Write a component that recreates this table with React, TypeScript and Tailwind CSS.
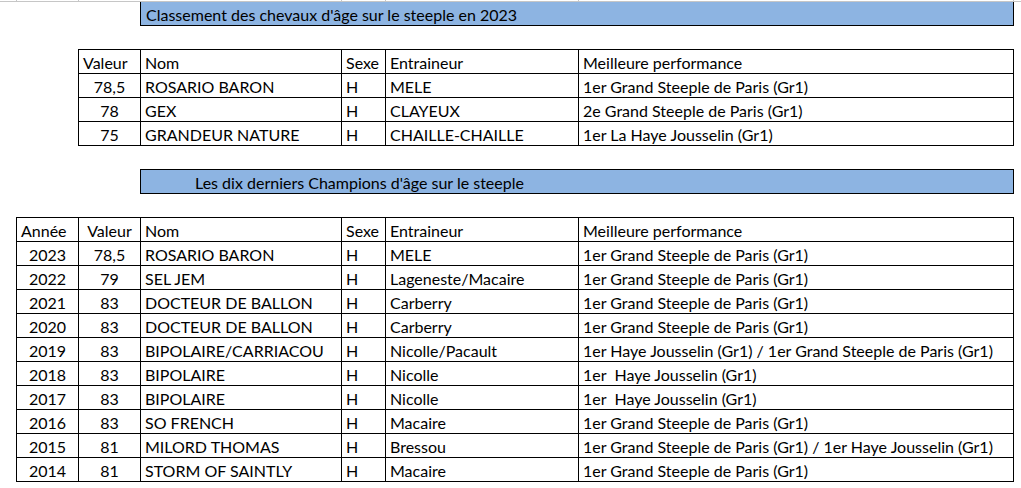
const FONT = { fontFamily: 'Lato, "Open Sans", sans-serif' }

type Row = string[]

const top: Row[] = [
  ['78,5', 'ROSARIO BARON', 'H', 'MELE', '1er Grand Steeple de Paris (Gr1)'],
  ['78', 'GEX', 'H', 'CLAYEUX', '2e Grand Steeple de Paris (Gr1)'],
  ['75', 'GRANDEUR NATURE', 'H', 'CHAILLE-CHAILLE', '1er La Haye Jousselin (Gr1)'],
]

const champions: Row[] = [
  ['2023', '78,5', 'ROSARIO BARON', 'H', 'MELE', '1er Grand Steeple de Paris (Gr1)'],
  ['2022', '79', 'SEL JEM', 'H', 'Lageneste/Macaire', '1er Grand Steeple de Paris (Gr1)'],
  ['2021', '83', 'DOCTEUR DE BALLON', 'H', 'Carberry', '1er Grand Steeple de Paris (Gr1)'],
  ['2020', '83', 'DOCTEUR DE BALLON', 'H', 'Carberry', '1er Grand Steeple de Paris (Gr1)'],
  ['2019', '83', 'BIPOLAIRE/CARRIACOU', 'H', 'Nicolle/Pacault', '1er Haye Jousselin (Gr1) / 1er Grand Steeple de Paris (Gr1)'],
  ['2018', '83', 'BIPOLAIRE', 'H', 'Nicolle', '1er\u00a0 Haye Jousselin (Gr1)'],
  ['2017', '83', 'BIPOLAIRE', 'H', 'Nicolle', '1er\u00a0 Haye Jousselin (Gr1)'],
  ['2016', '83', 'SO FRENCH', 'H', 'Macaire', '1er Grand Steeple de Paris (Gr1)'],
  ['2015', '81', 'MILORD THOMAS', 'H', 'Bressou', '1er Grand Steeple de Paris (Gr1) / 1er Haye Jousselin (Gr1)'],
  ['2014', '81', 'STORM OF SAINTLY', 'H', 'Macaire', '1er Grand Steeple de Paris (Gr1)'],
]

// cell widths include the right border line
const W_NUM = 'w-[62px]'
const cols = ['w-[201px]', 'w-[44px]', 'w-[193px]', 'w-[435px]']

function Cell({ w, center, children }: { w: string; center?: boolean; children: React.ReactNode }) {
  return (
    <div
      className={`${w} shrink-0 h-[23px] border-r border-black leading-[25px] whitespace-pre overflow-hidden ${center ? 'text-center' : 'pl-[4px]'}`}
    >
      {children}
    </div>
  )
}

function Title({ text, pad }: { text: string; pad: string }) {
  return (
    <div className={`ml-[140px] w-[874px] h-[24px] bg-[#8db4e2] border-x border-b border-black leading-[25px] ${pad}`}>
      {text}
    </div>
  )
}

export default function App() {
  return (
    <div className="w-[1021px] h-[488px] bg-white text-black text-[16px] overflow-hidden relative" style={FONT}>
      {/* sheet gridline strip */}
      <div className="h-[2px] border-b border-[#c6c6c6] relative">
        {[16, 78, 341, 385, 578, 1013].map(x => (
          <div key={x} className="absolute top-0 w-px h-[2px] bg-[#c6c6c6]" style={{ left: x }} />
        ))}
      </div>

      <Title text="Classement des chevaux d'âge sur le steeple en 2023" pad="pl-[5px]" />

      {/* table 1 */}
      <div className="mt-[23px] ml-[78px] w-fit border-t border-l border-black">
        <div className="flex border-b border-black">
          <Cell w={W_NUM}>Valeur</Cell>
          <Cell w={cols[0]}>Nom</Cell>
          <Cell w={cols[1]}>Sexe</Cell>
          <Cell w={cols[2]}>Entraineur</Cell>
          <Cell w={cols[3]}>Meilleure performance</Cell>
        </div>
        {top.map((r, i) => (
          <div key={i} className="flex border-b border-black">
            <Cell w={W_NUM} center>{r[0]}</Cell>
            <Cell w={cols[0]}>{r[1]}</Cell>
            <Cell w={cols[1]}>{r[2]}</Cell>
            <Cell w={cols[2]}>{r[3]}</Cell>
            <Cell w={cols[3]}>{r[4]}</Cell>
          </div>
        ))}
      </div>

      <div className="mt-[23px] border-t border-black ml-[140px] w-[874px]" />
      <Title text="Les dix derniers Champions d'âge sur le steeple" pad="pl-[54px]" />

      {/* table 2 */}
      <div className="mt-[23px] ml-[16px] w-fit border-t border-l border-black">
        <div className="flex border-b border-black">
          <Cell w={W_NUM}>Année</Cell>
          <Cell w={W_NUM} center>Valeur</Cell>
          <Cell w={cols[0]}>Nom</Cell>
          <Cell w={cols[1]}>Sexe</Cell>
          <Cell w={cols[2]}>Entraineur</Cell>
          <Cell w={cols[3]}>Meilleure performance</Cell>
        </div>
        {champions.map((r, i) => (
          <div key={i} className="flex border-b border-black">
            <Cell w={W_NUM} center>{r[0]}</Cell>
            <Cell w={W_NUM} center>{r[1]}</Cell>
            <Cell w={cols[0]}>{r[2]}</Cell>
            <Cell w={cols[1]}>{r[3]}</Cell>
            <Cell w={cols[2]}>{r[4]}</Cell>
            <Cell w={cols[3]}>{r[5]}</Cell>
          </div>
        ))}
      </div>
    </div>
  )
}
